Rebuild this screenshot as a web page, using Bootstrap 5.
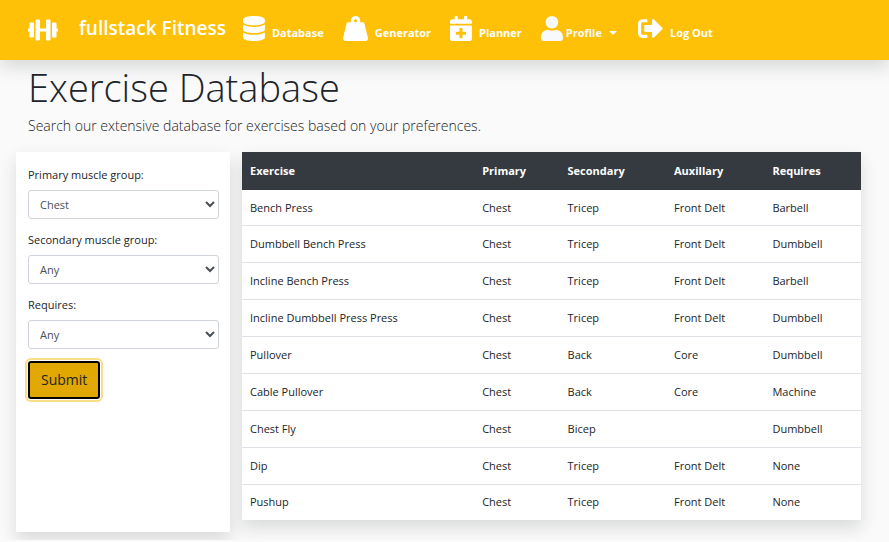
<!DOCTYPE html>
<html lang="en">
<head>
<meta charset="utf-8">
<meta name="viewport" content="width=device-width, initial-scale=1">
<title>fullstack Fitness</title>
<link href="https://cdn.jsdelivr.net/npm/bootstrap@5.3.0/dist/css/bootstrap.min.css" rel="stylesheet">
<style>
body { font-family: "Open Sans", "Noto Sans", sans-serif; font-size: 11px; line-height: 18px; background: #fafafa; color: #212529; }
.topbar { background: #ffc107; min-height: 60px; padding: 0 28px; color: #fff; position: relative; }
.topbar .navbar-brand { color: #fff; font-size: 19px; font-weight: 600; line-height: 24px; gap: 21px; margin-right: 17px; padding: 0 0 4px; }
.topbar .navbar-nav .nav-link { color: #fff; font-size: 11px; font-weight: 700; padding: 0; line-height: 16px; gap: 7px; }
.topbar .navbar-nav { gap: 19px; padding-bottom: 3px; }
.topbar svg { fill: currentColor; height: 25px; display: block; }
.topbar .brand-icon { height: 24px; margin-top: 4px; }
.topbar .navbar-nav .profile-link { gap: 3px; color: #f8f9fa; margin-right: 2px; }
.topbar .dropdown-toggle::after { margin: 0 0 6px 4px; font-size: 14px; }
.page-head { padding: 3px 28px 0; }
.page-head h1 { font-size: 38px; font-weight: 300; line-height: 48px; margin: 0 0 5px; }
.page-head p { font-size: 14px; font-weight: 300; line-height: 20px; margin: 0 0 16px; }
.content-grid { display: grid; grid-template-columns: 214fr 619fr; gap: 12px; padding: 0 28px 8px 16px; }
.filters { padding: 14px 11px 14px 12px; }
.filters label { line-height: 18px; margin-bottom: 6px; display: block; }
.filters select { display: block; width: 100%; height: 29px; margin-bottom: 12px; padding: 0 7px; font-size: 11px; color: #495057; background: #fff; border: 1px solid #ced4da; border-radius: 3px; }
.submit-btn, .submit-btn:hover { background: #e0a800; border: 2px solid #000; border-radius: 3px; color: #212529; font-size: 14px; line-height: 22px; padding: 6px 11px; box-shadow: 0 0 0 1px #fff, 0 0 0 3px #f7dc8a; }
.results { margin-bottom: 12px; }
.results table { width: 100%; height: 368px; background: #fff; table-layout: fixed; }
.results th, .results td { padding: 0 8px; vertical-align: middle; border-top: 1px solid #dee2e6; }
.results thead th { height: 38px; background: #343a40; color: #fff; border-top: 0; font-weight: 700; }
.results tbody tr:first-child td { border-top: 0; }
.c-name { width: 37.5%; } .c-pri { width: 13.8%; } .c-sec { width: 17.2%; } .c-aux { width: 15.9%; }
</style>
<script defer src="https://cdn.jsdelivr.net/npm/bootstrap@5.3.0/dist/js/bootstrap.bundle.min.js"></script>
</head>
<body>
<nav class="navbar navbar-expand topbar shadow">
  <a class="navbar-brand d-flex align-items-center" href="#">
    <svg class="brand-icon" viewBox="0 0 640 512" aria-hidden="true"><path d="M104 96H56c-13.3 0-24 10.7-24 24v104H8c-4.400 0-8 3.600-8 8v48c0 4.400 3.600 8 8 8h24v104c0 13.300 10.700 24 24 24h48c13.300 0 24-10.700 24-24V120c0-13.300-10.700-24-24-24zm528 128h-24V120c0-13.300-10.700-24-24-24h-48c-13.300 0-24 10.700-24 24v272c0 13.300 10.700 24 24 24h48c13.300 0 24-10.700 24-24V288h24c4.400 0 8-3.600 8-8v-48c0-4.400-3.600-8-8-8zM456 32h-48c-13.300 0-24 10.700-24 24v168H256V56c0-13.300-10.700-24-24-24h-48c-13.300 0-24 10.700-24 24v400c0 13.300 10.700 24 24 24h48c13.300 0 24-10.700 24-24V288h128v168c0 13.300 10.700 24 24 24h48c13.300 0 24-10.700 24-24V56c0-13.300-10.700-24-24-24z"/></svg>
    <span>fullstack Fitness</span>
  </a>
  <div class="navbar-nav">
    <a class="nav-link d-flex align-items-end" href="#"><svg viewBox="0 0 448 512" aria-hidden="true"><path d="M448 73.143v45.714C448 159.143 347.667 192 224 192S0 159.143 0 118.857V73.143C0 32.857 100.333 0 224 0s224 32.857 224 73.143zM448 176v102.857C448 319.143 347.667 352 224 352S0 319.143 0 278.857V176c48.125 33.143 136.208 48.572 224 48.572S399.874 209.143 448 176zm0 160v102.857C448 479.143 347.667 512 224 512S0 479.143 0 438.857V336c48.125 33.143 136.208 48.572 224 48.572S399.874 369.143 448 336z"/></svg><span>Database</span></a>
    <a class="nav-link d-flex align-items-end" href="#"><svg viewBox="0 0 512 512" aria-hidden="true"><path d="M510.280 445.860l-73.030-292.130c-3.800-15.190-16.440-25.720-30.870-25.720h-60.250c3.570-10.050 5.880-20.720 5.880-32 0-53.020-42.980-96-96-96s-96 42.980-96 96c0 11.280 2.300 21.950 5.880 32h-60.250c-14.430 0-27.080 10.540-30.870 25.720L1.720 445.860C-6.610 479.170 16.380 512 48.030 512h415.950c31.640 0 54.630-32.830 46.300-66.140zM256 128c-17.640 0-32-14.360-32-32s14.360-32 32-32 32 14.360 32 32-14.360 32-32 32z"/></svg><span>Generator</span></a>
    <a class="nav-link d-flex align-items-end" href="#"><svg viewBox="0 0 448 512" aria-hidden="true"><path d="M436 160H12c-6.600 0-12-5.400-12-12v-36c0-26.500 21.500-48 48-48h48V12c0-6.600 5.400-12 12-12h40c6.600 0 12 5.400 12 12v52h128V12c0-6.600 5.400-12 12-12h40c6.600 0 12 5.400 12 12v52h48c26.500 0 48 21.500 48 48v36c0 6.600-5.400 12-12 12zM12 192h424c6.600 0 12 5.400 12 12v260c0 26.500-21.500 48-48 48H48c-26.500 0-48-21.500-48-48V204c0-6.600 5.400-12 12-12zm316 140c0-6.600-5.400-12-12-12h-60v-60c0-6.600-5.400-12-12-12h-40c-6.600 0-12 5.400-12 12v60h-60c-6.600 0-12 5.400-12 12v40c0 6.600 5.400 12 12 12h60v60c0 6.600 5.400 12 12 12h40c6.600 0 12-5.400 12-12v-60h60c6.600 0 12-5.400 12-12v-40z"/></svg><span>Planner</span></a>
    <button type="button" class="nav-link btn border-0 dropdown-toggle profile-link d-flex align-items-end" data-bs-toggle="dropdown" aria-expanded="false"><svg viewBox="0 0 448 512" aria-hidden="true"><path d="M224 256c70.700 0 128-57.300 128-128S294.700 0 224 0 96 57.300 96 128s57.300 128 128 128zm89.600 32h-16.700c-22.200 10.200-46.900 16-72.900 16s-50.600-5.800-72.900-16h-16.700C60.200 288 0 348.200 0 422.400V464c0 26.500 21.500 48 48 48h352c26.500 0 48-21.500 48-48v-41.600c0-74.200-60.200-134.400-134.400-134.400z"/></svg><span>Profile</span></button>
    <a class="nav-link d-flex align-items-end" href="#"><svg viewBox="0 0 512 512" aria-hidden="true"><path d="M497 273L329 441c-15 15-41 4.500-41-17v-96H152c-13.300 0-24-10.700-24-24v-96c0-13.300 10.700-24 24-24h136V88c0-21.400 25.900-32 41-17l168 168c9.300 9.400 9.300 24.600 0 34zM192 436v-40c0-6.600-5.400-12-12-12H96c-17.700 0-32-14.300-32-32V160c0-17.700 14.300-32 32-32h84c6.600 0 12-5.400 12-12V76c0-6.600-5.400-12-12-12H96c-53 0-96 43-96 96v192c0 53 43 96 96 96h84c6.600 0 12-5.400 12-12z"/></svg><span>Log Out</span></a>
  </div>
</nav>
<header class="page-head">
  <h1>Exercise Database</h1>
  <p>Search our extensive database for exercises based on your preferences.</p>
</header>
<main class="content-grid">
  <form class="filters bg-white shadow">
    <label for="primary">Primary muscle group:</label>
    <select id="primary"><option>Chest</option></select>
    <label for="secondary">Secondary muscle group:</label>
    <select id="secondary"><option>Any</option></select>
    <label for="requires">Requires:</label>
    <select id="requires"><option>Any</option></select>
    <button type="button" class="btn submit-btn">Submit</button>
  </form>
  <section class="results shadow">
    <table>
      <colgroup><col class="c-name"><col class="c-pri"><col class="c-sec"><col class="c-aux"><col></colgroup>
      <thead><tr><th>Exercise</th><th>Primary</th><th>Secondary</th><th>Auxillary</th><th>Requires</th></tr></thead>
      <tbody>
        <tr><td>Bench Press</td><td>Chest</td><td>Tricep</td><td>Front Delt</td><td>Barbell</td></tr>
        <tr><td>Dumbbell Bench Press</td><td>Chest</td><td>Tricep</td><td>Front Delt</td><td>Dumbbell</td></tr>
        <tr><td>Incline Bench Press</td><td>Chest</td><td>Tricep</td><td>Front Delt</td><td>Barbell</td></tr>
        <tr><td>Incline Dumbbell Press Press</td><td>Chest</td><td>Tricep</td><td>Front Delt</td><td>Dumbbell</td></tr>
        <tr><td>Pullover</td><td>Chest</td><td>Back</td><td>Core</td><td>Dumbbell</td></tr>
        <tr><td>Cable Pullover</td><td>Chest</td><td>Back</td><td>Core</td><td>Machine</td></tr>
        <tr><td>Chest Fly</td><td>Chest</td><td>Bicep</td><td></td><td>Dumbbell</td></tr>
        <tr><td>Dip</td><td>Chest</td><td>Tricep</td><td>Front Delt</td><td>None</td></tr>
        <tr><td>Pushup</td><td>Chest</td><td>Tricep</td><td>Front Delt</td><td>None</td></tr>
      </tbody>
    </table>
  </section>
</main>
</body>
</html>
